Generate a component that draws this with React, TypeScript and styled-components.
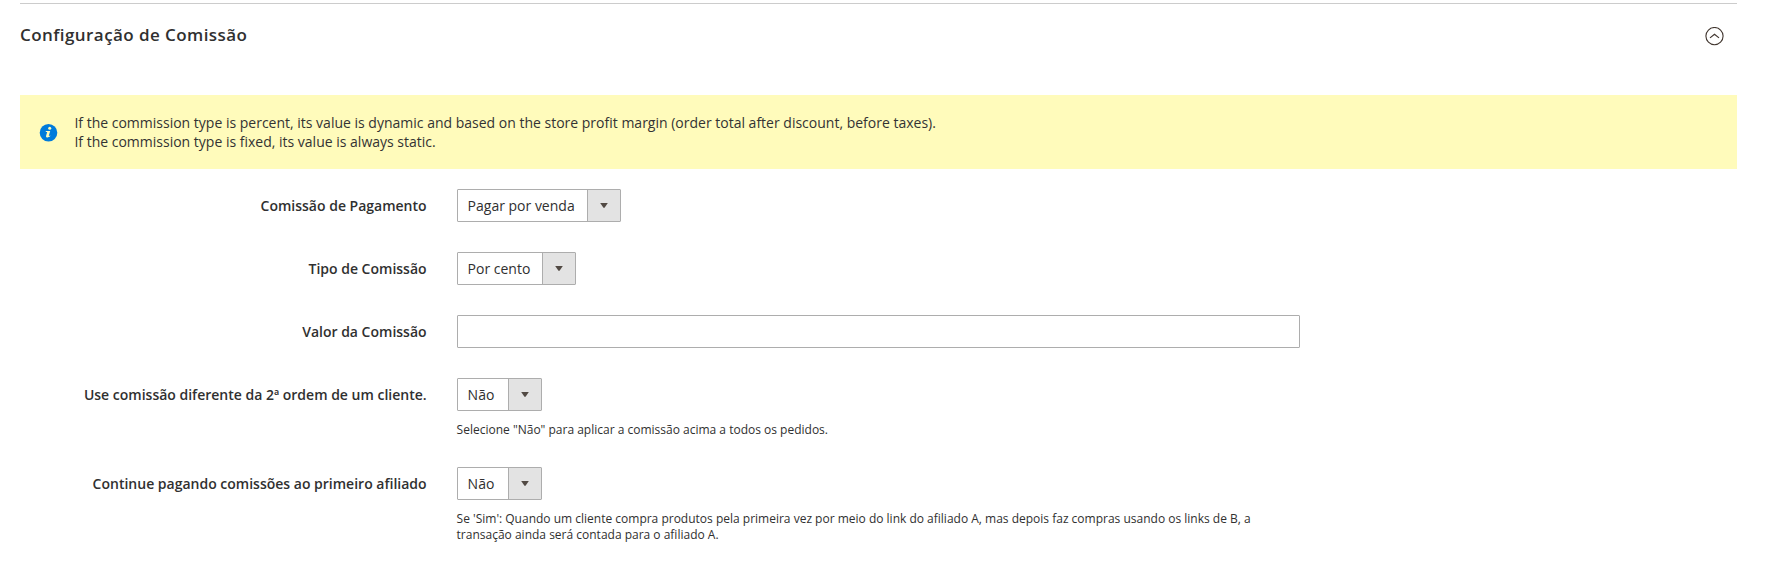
import React from "react";
import styled, { createGlobalStyle } from "styled-components";

const GlobalStyle = createGlobalStyle`
  *, *::before, *::after { box-sizing: border-box; }
  body {
    margin: 0;
    background: #fff;
    color: #303030;
    font: 400 14px/19px "Open Sans", "Noto Sans", sans-serif;
  }
`;

const Section = styled.section`
  margin: 3px 28px 0 20px;
  border-top: 1px solid #cccccc;
`;

const SectionHeader = styled.header`
  display: flex;
  align-items: center;
  justify-content: space-between;
  height: 63px;
  padding-right: 13px;
`;

const Title = styled.h2`
  margin: 0;
  padding-bottom: 2px;
  font-size: 17px;
  line-height: 24px;
  font-weight: 600;
  letter-spacing: 0.43px;
`;

const ToggleButton = styled.button`
  display: flex;
  padding: 1px 0 0;
  border: 0;
  background: none;
  cursor: pointer;
`;

const Message = styled.div`
  display: flex;
  align-items: center;
  height: 74px;
  margin-top: 28px;
  padding-left: 19px;
  background: #fffbbb;
  color: #333;
`;

const MessageText = styled.p`
  margin: 0 0 0 16.4px;
`;

const Form = styled.form`
  display: flex;
  flex-direction: column;
  gap: 30px;
  padding-top: 20px;
`;

const Field = styled.div`
  display: grid;
  grid-template-columns: 406.6px 843px;
  column-gap: 30px;
`;

const Label = styled.label`
  height: 33px;
  line-height: 33px;
  font-weight: 600;
  text-align: right;
`;

const Select = styled.button<{ $width: number }>`
  display: flex;
  justify-content: space-between;
  width: ${(p) => p.$width}px;
  height: 33px;
  padding: 0 0 0 10px;
  border: 1px solid #adadad;
  border-radius: 1px;
  background: #fff;
  color: #303030;
  font: inherit;
  line-height: 31px;
`;

const Arrow = styled.span`
  display: flex;
  align-items: center;
  justify-content: center;
  width: 33px;
  height: 31px;
  border-left: 1px solid #adadad;
  background: #e3e3e3;
`;

const TextInput = styled.input`
  width: 100%;
  height: 33px;
  padding: 0 10px;
  border: 1px solid #adadad;
  border-radius: 1px;
  font: inherit;
`;

const Note = styled.p`
  margin: 11px 0 -1px;
  font-size: 12px;
  line-height: 16px;
`;

function Dropdown({ id, value, width }: { id: string; value: string; width: number }) {
  return (
    <Select id={id} type="button" $width={width}>
      {value}
      <Arrow>
        <svg width="8" height="5" viewBox="0 0 8 5">
          <path d="M0.2 0H7.8L4.7 4.6Q4 5.2 3.3 4.6Z" fill="#514943" />
        </svg>
      </Arrow>
    </Select>
  );
}

export default function App() {
  return (
    <>
      <GlobalStyle />
      <Section>
        <SectionHeader>
          <Title>Configuração de Comissão</Title>
          <ToggleButton type="button" aria-label="Recolher">
            <svg width="19" height="19" viewBox="0 0 19 19" fill="none" stroke="#41362f">
              <circle cx="9.5" cy="9.1" r="8.6" strokeWidth="1.1" />
              <path d="M5 10.9L9.5 7.2L14 10.9" strokeWidth="1.2" />
            </svg>
          </ToggleButton>
        </SectionHeader>
        <Message>
          <svg width="19" height="20" viewBox="0 0 19 20">
            <g transform="translate(0 1.2)">
              <circle cx="9.5" cy="9.5" r="8.8" fill="#007bdb" />
              <circle cx="10.7" cy="5.1" r="1.5" fill="#fffbbb" />
              <path d="M6.9 7.7H11.2L9.8 12.5Q9.7 13.1 11.4 12.4L11 13.4Q9.5 14.4 8 14.2Q6.6 14 7.1 12.5L8.2 8.8L6.7 8.7Z" fill="#fffbbb" />
            </g>
          </svg>
          <MessageText>
            If the commission type is percent, its value is dynamic and based on the store profit margin (order total after discount, before taxes).
            <br />
            If the commission type is fixed, its value is always static.
          </MessageText>
        </Message>
        <Form>
          <Field>
            <Label htmlFor="payment">Comissão de Pagamento</Label>
            <Dropdown id="payment" value="Pagar por venda" width={164} />
          </Field>
          <Field>
            <Label htmlFor="type">Tipo de Comissão</Label>
            <Dropdown id="type" value="Por cento" width={119} />
          </Field>
          <Field>
            <Label htmlFor="amount">Valor da Comissão</Label>
            <TextInput id="amount" type="text" />
          </Field>
          <Field>
            <Label htmlFor="second">Use comissão diferente da 2ª ordem de um cliente.</Label>
            <div>
              <Dropdown id="second" value="Não" width={85} />
              <Note>Selecione "Não" para aplicar a comissão acima a todos os pedidos.</Note>
            </div>
          </Field>
          <Field>
            <Label htmlFor="first">Continue pagando comissões ao primeiro afiliado</Label>
            <div>
              <Dropdown id="first" value="Não" width={85} />
              <Note>
                Se 'Sim': Quando um cliente compra produtos pela primeira vez por meio do link do afiliado A, mas depois faz compras usando os links de B, a transação ainda será contada para o afiliado A.
              </Note>
            </div>
          </Field>
        </Form>
      </Section>
    </>
  );
}
